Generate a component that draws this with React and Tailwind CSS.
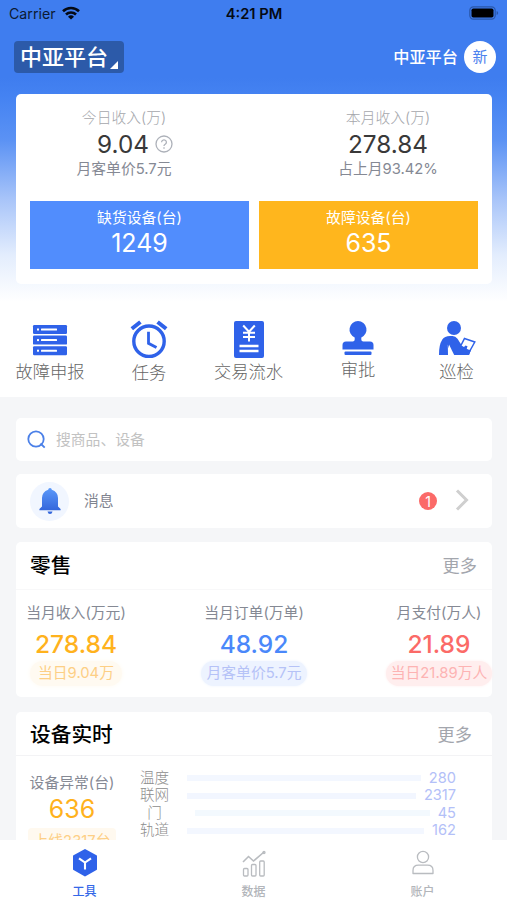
import React, { useState } from 'react'
import clsx from 'clsx'

const SHORTCUTS = [
  { label: '故障申报', icon: ServerIcon, cell: 'w-[100px]' },
  { label: '任务', icon: ClockIcon, cell: 'w-[98px]', text: 'mt-px' },
  { label: '交易流水', icon: BillIcon, cell: 'w-[101px]' },
  { label: '审批', icon: StampIcon, cell: 'w-[118px]', text: '-mt-[2px]' },
  { label: '巡检', icon: InspectIcon, cell: 'w-[79px]' },
]

const RETAIL = [
  { label: '当月收入(万元)', value: '278.84', note: '当日9.04万', cell: 'w-[120px]',
    color: 'text-[#ffb21d]', pill: 'bg-[#fffaf1] text-[#fdcf85] shadow-[0_0_5px_#fffaf1] px-2' },
  { label: '当月订单(万单)', value: '48.92', note: '月客单价5.7元', cell: 'w-[120px] mr-[7px]',
    color: 'text-[#4a88fa]', pill: 'bg-[#edf3ff] text-[#b5c2f7] shadow-[0_0_3px_#edf3ff] px-[5px]' },
  { label: '月支付(万人)', value: '21.89', note: '当日21.89万人', cell: 'w-[120px]',
    color: 'text-[#fb6a67]', pill: 'bg-[#ffeeee] text-[#fdb3b3] shadow-[0_0_3px_#ffeeee] px-[5px]' },
]

const DEVICES = [
  { label: '温度', value: '280', bar: 'ml-[17px] mr-2 bg-[#f3f7ff]' },
  { label: '联网', value: '2317', bar: 'ml-[17px] mr-2 bg-[#f2f6ff]' },
  { label: '门', value: '45', bar: 'ml-[25px] mr-2 bg-[#f3f9fe]' },
  { label: '轨道', value: '162', bar: 'ml-[17px] mr-2 bg-[#f3f7ff]' },
]

const TABS = [
  { key: 'tools', label: '工具', icon: CubeIcon },
  { key: 'data', label: '数据', icon: ChartIcon },
  { key: 'account', label: '账户', icon: UserIcon },
]

export default function App() {
  const [tab, setTab] = useState('tools')

  return (
    <div className="flex h-[900px] w-[507px] flex-col overflow-hidden bg-[#f5f6f8] font-[Inter,'Noto_Sans_CJK_SC',sans-serif] whitespace-nowrap">
      <div className="h-[397px] shrink-0 bg-white bg-[linear-gradient(180deg,#3f7def_0,#3f7def_78px,#4583f2_98px,#5b92f4_140px,#a9c5f9_200px,#e3edfd_255px,#ffffff_302px)]">
        <StatusBar />
        <Header />
        <Summary />
        <div className="mt-[35px] flex">
          {SHORTCUTS.map(s => (
            <div key={s.label} className={clsx('flex flex-col items-center', s.cell)}>
              <s.icon />
              <span className={clsx('text-[17.3px] leading-[26px] text-[#666666] font-light', s.text)}>{s.label}</span>
            </div>
          ))}
        </div>
      </div>

      <main className="flex min-h-0 flex-1 flex-col overflow-hidden pr-[15px] pl-4">
        <div className="mt-[21px] flex h-[43px] shrink-0 items-center rounded-[5px] bg-white pl-[11px]">
          <SearchIcon />
          <span className="mt-[2px] ml-[10px] text-[14.8px] text-[#c2c2c2]">搜商品、设备</span>
        </div>

        <div className="mt-[13px] flex h-[54px] shrink-0 items-center rounded-[5px] bg-white pr-[21px] pl-[14px]">
          <div className="flex size-[39px] items-center justify-center rounded-full bg-[#f1f6ff]">
            <BellIcon />
          </div>
          <span className="ml-[15px] text-[14.8px] text-[#7f8490]">消息</span>
          <span className="ml-auto flex size-[18px] items-center justify-center rounded-full bg-[#fb6a68] text-[14px] text-white">1</span>
          <svg className="-mt-[2px] ml-[17px]" width="17" height="24" viewBox="0 0 17 24" fill="none" stroke="#cfcfcf" strokeWidth="3">
            <path d="M3 2.5l9.5 9.5L3 21.5" />
          </svg>
        </div>

        <section className="mt-[14px] h-[155px] shrink-0 rounded-[5px] bg-white">
          <PanelTitle title="零售" more="mr-[15px]" line="h-[48px] pt-px border-[#f8f8f9]" />
          <div className="-mr-[7px] flex justify-between pt-3">
            {RETAIL.map(r => (
              <div key={r.label} className={clsx('flex flex-col items-center', r.cell)}>
                <span className="text-[14.8px] leading-[22px] text-[#858994]">{r.label}</span>
                <span className={clsx('text-[24.5px] leading-[40px] font-medium', r.color)}>{r.value}</span>
                <span className={clsx('-mt-[3px] rounded-full text-[14.8px] leading-[25px]', r.pill)}>{r.note}</span>
              </div>
            ))}
          </div>
        </section>

        <section className="mt-[15px] h-[170px] shrink-0 rounded-t-[5px] bg-white">
          <PanelTitle title="设备实时" more="mr-[20px]" line="h-[44px] pt-[3px] border-[#f3f3f5]" />
          <div className="flex">
            <div className="flex w-[112px] flex-col items-center pt-4">
              <span className="text-[14.8px] leading-[22px] text-[#858994]">设备异常(台)</span>
              <span className="text-[25px] leading-[31px] text-[#ffb21d]">636</span>
              <span className="mt-[3px] rounded-[4px] bg-[#fff9ef] px-[6px] text-[14.8px] leading-[26px] text-[#fdcf85]">上线2317台</span>
            </div>
            <div className="ml-[11px] w-[317px] pt-[13.5px]">
              {DEVICES.map(d => (
                <div key={d.label} className="flex h-[17.5px] items-center text-[14.6px] leading-[17.5px]">
                  <span className="w-[31px] text-center font-light text-[#8d8d8d]">{d.label}</span>
                  <span className={clsx('h-[6px] flex-1', d.bar)} />
                  <span className="text-[#b3c0f8]">{d.value}</span>
                </div>
              ))}
            </div>
          </div>
        </section>
      </main>

      <nav className="grid h-[60px] shrink-0 grid-cols-3 bg-white">
        {TABS.map(t => (
          <button
            key={t.key}
            onClick={() => setTab(t.key)}
            className={clsx('flex flex-col items-center pt-[7px] text-[12px] leading-[18px] font-medium', tab === t.key ? 'text-[#3468e8]' : 'text-[#b2b5ba]')}
          >
            <t.icon />
            <span className="mt-1">{t.label}</span>
          </button>
        ))}
      </nav>
    </div>
  )
}

function StatusBar() {
  return (
    <div className="grid h-[27px] grid-cols-3 items-center pr-2 pl-[9px] text-[14.2px] text-[#0c1a33]">
      <div className="flex items-center gap-[6px]">
        <span>Carrier</span>
        <svg className="-mt-px" width="18" height="14" viewBox="0 0 18 14" fill="none" stroke="#050a14" strokeWidth="2.6">
          <path d="M1 5.2a11.5 11.5 0 0 1 16 0" />
          <path d="M4 8.5a7.2 7.2 0 0 1 10 0" />
          <path d="M9 13.6L6 10.7a4.3 4.3 0 0 1 6 0z" fill="#050a14" stroke="none" />
        </svg>
      </div>
      <span className="pt-[2px] text-center text-[14.7px] font-semibold text-[#050a14]">4:21 PM</span>
      <svg className="-mt-px justify-self-end" width="30" height="14" viewBox="0 0 30 14">
        <rect x="0.8" y="0.8" width="25.4" height="12.4" rx="3.6" fill="none" stroke="#2a57a9" strokeWidth="1.2" />
        <rect x="2.5" y="2.4" width="22" height="9.2" rx="1.8" fill="#000" />
        <path d="M27.6 5v4q1.6-.6 1.6-2t-1.6-2z" fill="#2a57a9" />
      </svg>
    </div>
  )
}

function Header() {
  return (
    <div className="flex h-[67px] items-center justify-between pr-[11px] pb-[7px] pl-[14px] text-white">
      <div className="flex h-8 w-[110px] items-center rounded-[4px] bg-[#2c5aa9] pl-[6px]">
        <span className="text-[22px] leading-8 font-medium">中亚平台</span>
        <svg className="mt-[15px] ml-[2px]" width="8" height="8" viewBox="0 0 8 8"><path d="M8 0v8H0z" fill="#fff" /></svg>
      </div>
      <div className="flex items-center gap-[6px]">
        <span className="text-[16.2px] font-medium">中亚平台</span>
        <span className="flex size-8 items-center justify-center rounded-full bg-white text-[15px] text-[#4c82ee]">新</span>
      </div>
    </div>
  )
}

function Summary() {
  return (
    <div className="mr-[15px] ml-4 flex h-[190px] flex-col rounded-[5px] bg-white px-[14px] pt-3">
      <div className="flex justify-between">
        <div className="flex w-[188px] flex-col items-center">
          <span className="text-[14.8px] leading-[24px] font-light text-[#a5a7ac]">今日收入(万)</span>
          <div className="ml-[22px] flex items-center gap-[6px]">
            <span className="text-[24.3px] leading-[28px] text-[#393939]">9.04</span>
            <svg width="18" height="18" viewBox="0 0 18 18" fill="none" stroke="#adb1b9" strokeWidth="1.3">
              <circle cx="9" cy="9" r="8" />
              <path d="M6.6 7.2a2.4 2.3 0 1 1 3.6 2q-1.2.7-1.2 1.8" />
              <path d="M9 12.3v1.5" />
            </svg>
          </div>
          <span className="text-[14.8px] leading-[22px] text-[#858994]">月客单价5.7元</span>
        </div>
        <div className="mr-[-4px] flex w-[188px] flex-col items-center">
          <span className="text-[14.8px] leading-[24px] font-light text-[#a5a7ac]">本月收入(万)</span>
          <span className="text-[24.3px] leading-[28px] text-[#393939]">278.84</span>
          <span className="text-[14.8px] leading-[22px] text-[#858994]">占上月93.42%</span>
        </div>
      </div>
      <div className="mt-[21px] grid h-[68px] grid-cols-2 gap-[10px] text-white">
        <div className="flex flex-col items-center bg-[#518dfd] pt-[6px]">
          <span className="text-[14.8px] leading-[22px]">缺货设备(台)</span>
          <span className="text-[25px] leading-[28px]">1249</span>
        </div>
        <div className="flex flex-col items-center bg-[#ffb61d] pt-[6px]">
          <span className="text-[14.8px] leading-[22px]">故障设备(台)</span>
          <span className="text-[25px] leading-[28px]">635</span>
        </div>
      </div>
    </div>
  )
}

function PanelTitle({ title, more, line }) {
  return (
    <div className={clsx('flex items-center justify-between border-b pl-[14px]', line)}>
      <h2 className="text-[20.7px] font-medium text-black">{title}</h2>
      <span className={clsx('text-[17.2px] text-[#a3a6ad]', more)}>更多</span>
    </div>
  )
}

function ServerIcon() {
  return (
    <svg width="38" height="40" viewBox="0 0 38 40">
      {[6, 16.6, 27.2].map(y => (
        <g key={y}>
          <rect x="2" y={y} width="34" height="9" rx="1.2" fill="#2f62e9" />
          <rect x="6" y={y + 3.5} width="2" height="2" fill="#fff" />
          <rect x="10" y={y + 3.5} width="16" height="2" rx="0.5" fill="#fff" />
        </g>
      ))}
    </svg>
  )
}

function ClockIcon() {
  return (
    <svg width="38" height="40" viewBox="0 0 38 40" fill="none" stroke="#2f62e9">
      <circle cx="19" cy="22.2" r="15.2" strokeWidth="3.4" />
      <path d="M18.5 12.7v11.6l8 4.3" strokeWidth="2.8" />
      <path d="M1.8 9.8l8.6-6.8M36.2 9.8L27.6 3" strokeWidth="4" />
    </svg>
  )
}

function BillIcon() {
  return (
    <svg width="38" height="40" viewBox="0 0 38 40" fill="none" stroke="#fff" strokeWidth="2.4">
      <rect x="4" y="2" width="30" height="37" rx="2" fill="#2f62e9" stroke="none" />
      <path d="M13.2 6.5l5.8 6.3 5.8-6.3M19 12v10.5M13 13.8h12M13 18h12" strokeWidth="2" />
      <path d="M9.5 27h19M9.5 32h19" />
    </svg>
  )
}

function StampIcon() {
  return (
    <svg width="38" height="40" viewBox="0 0 38 40" fill="#2f62e9">
      <path d="M19 2a8.6 8.6 0 0 1 3.3 16.5v2.1q0 1.9 2 1.9H31q3.5 0 3.5 3.5v4.5H3.5V26q0-3.5 3.5-3.5h6.7q2 0 2-1.9v-2.1A8.6 8.6 0 0 1 19 2z" />
      <rect x="5.5" y="32.5" width="27" height="3.5" rx="1" />
    </svg>
  )
}

function InspectIcon() {
  return (
    <svg width="38" height="40" viewBox="0 0 38 40" fill="#2f62e9">
      <circle cx="16" cy="9" r="7" />
      <path d="M1 36q-.2-10 3.3-15.5Q6.5 17 12 17h2.5q3 0 5 2.7l6.2 9.8h7.5L31 36H13L9.800 25.500 10 36z" />
      <path d="M11 25.500l5.200 10.500h-5.200z" fill="#fff" />
      <path d="M26.5 19.5l10.300 3.500-5.300 9.500-8.800-5.500z" fill="#fff" stroke="#2f62e9" strokeWidth="1.5" />
      <path d="M22.500 31.500l5-5 2 .8-1 3.200 4.500.5-2 5h-8z" />
    </svg>
  )
}

function SearchIcon() {
  return (
    <svg width="19" height="19" viewBox="0 0 19 19" fill="none" stroke="#4b80e8" strokeWidth="1.8">
      <circle cx="9" cy="9" r="7.7" />
      <path d="M13.5 13.5l4.2 4.2" />
    </svg>
  )
}

function BellIcon() {
  return (
    <svg width="24" height="28" viewBox="0 0 24 28">
      <defs>
        <linearGradient id="bell" x1="0" y1="0" x2="0" y2="1">
          <stop offset="0" stopColor="#5b99fa" />
          <stop offset="1" stopColor="#3467dc" />
        </linearGradient>
      </defs>
      <path d="M12 1q1.7 0 1.8 1.8Q20 5 20 11v8.500l2.6 2.500v1.2H1.4V22L4 19.500V11q0-6 6.2-8.2Q10.300 1 12 1z" fill="url(#bell)" />
      <path d="M9.5 24.5h5q-.5 2.500-2.500 2.500t-2.500-2.500z" fill="#3467dc" />
    </svg>
  )
}

function CubeIcon() {
  return (
    <svg width="28" height="32" viewBox="0 0 28 32">
      <path d="M14 3l11 6.200v13L14 28.500 3 22.200v-13z" fill="#2f62e9" stroke="#2f62e9" strokeWidth="2" strokeLinejoin="round" />
      <path d="M8 11.3l6 4.200 6-4.200M14 15.500v7" fill="none" stroke="#fff" strokeWidth="2.1" />
    </svg>
  )
}

function ChartIcon() {
  return (
    <svg width="28" height="32" viewBox="0 0 28 32" fill="none" stroke="#b9bcc0" strokeWidth="1.3">
      <rect x="3.5" y="21.5" width="4.5" height="7.5" rx="1" />
      <rect x="11.5" y="17.5" width="4.5" height="11.5" rx="1" />
      <rect x="19.7" y="14" width="4.5" height="15" rx="1" />
      <path d="M3 15l5.500-5.500 5 4.500L24 5" strokeWidth="1.6" />
      <circle cx="24" cy="5.5" r="1" />
    </svg>
  )
}

function UserIcon() {
  return (
    <svg width="28" height="32" viewBox="0 0 28 32" fill="none" stroke="#b9bcc0" strokeWidth="1.3">
      <circle cx="14" cy="10" r="5.6" />
      <path d="M4 26.500v-3q0-5.300 5.500-5.300h9q5.500 0 5.500 5.300v3z" strokeLinejoin="round" />
    </svg>
  )
}
